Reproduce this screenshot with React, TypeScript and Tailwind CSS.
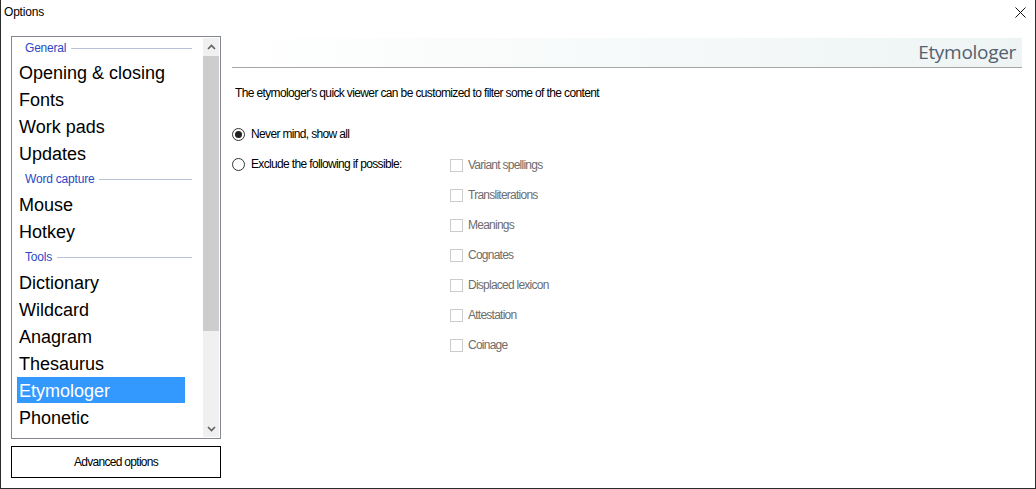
import React from 'react'

type Row = { kind: 'header' | 'item'; label: string; selected?: boolean }

const rows: Row[] = [
  { kind: 'header', label: 'General' },
  { kind: 'item', label: 'Opening & closing' },
  { kind: 'item', label: 'Fonts' },
  { kind: 'item', label: 'Work pads' },
  { kind: 'item', label: 'Updates' },
  { kind: 'header', label: 'Word capture' },
  { kind: 'item', label: 'Mouse' },
  { kind: 'item', label: 'Hotkey' },
  { kind: 'header', label: 'Tools' },
  { kind: 'item', label: 'Dictionary' },
  { kind: 'item', label: 'Wildcard' },
  { kind: 'item', label: 'Anagram' },
  { kind: 'item', label: 'Thesaurus' },
  { kind: 'item', label: 'Etymologer', selected: true },
  { kind: 'item', label: 'Phonetic' },
]

const filters = [
  'Variant spellings',
  'Transliterations',
  'Meanings',
  'Cognates',
  'Displaced lexicon',
  'Attestation',
  'Coinage',
]

function Radio({ checked }: { checked?: boolean }) {
  return (
    <span className="w-[13px] h-[13px] rounded-full border border-[#333] bg-white flex items-center justify-center shrink-0">
      {checked && <span className="w-[7px] h-[7px] rounded-full bg-[#222]" />}
    </span>
  )
}

function Chevron({ up }: { up?: boolean }) {
  return (
    <svg width="9" height="6" viewBox="0 0 9 6" fill="none">
      <path
        d={up ? 'M1 5L4.5 1.5L8 5' : 'M1 1L4.5 4.5L8 1'}
        stroke="#606060"
        strokeWidth="1.6"
      />
    </svg>
  )
}

export default function App() {
  return (
    <div
      className="w-[1036px] h-[489px] bg-white border-x border-b border-[#2b2b2b] flex flex-col text-black"
      style={{ fontFamily: '"Liberation Sans", Arial, sans-serif' }}
    >
      {/* title bar */}
      <div className="h-[24px] flex items-center justify-between pl-[3px] pr-[9px]">
        <span className="text-[12px] tracking-[-0.2px]">Options</span>
        <svg width="11" height="11" viewBox="0 0 11 11">
          <path d="M0.5 0.5L10.5 10.5M10.5 0.5L0.5 10.5" stroke="#111" strokeWidth="1" />
        </svg>
      </div>

      <div className="flex pt-[12px]">
        {/* left column */}
        <div className="ml-[10px] w-[210px] flex flex-col gap-[7px]">
          <div className="h-[403px] border border-[#828790] flex">
            <div className="flex-1 flex flex-col">
              {rows.map((r, i) =>
                r.kind === 'header' ? (
                  <div
                    key={r.label}
                    className={`${i === 0 ? 'h-[22px]' : 'h-[24px]'} flex items-center pl-[13px] pr-[11px] gap-[5px]`}
                  >
                    <span className="text-[12px] text-[#2a48c4] tracking-[-0.2px]">{r.label}</span>
                    <span className="flex-1 h-px bg-[#b8c3da]" />
                  </div>
                ) : (
                  <div key={r.label} className="h-[27px] flex items-start">
                    <div
                      className={`ml-[5px] w-[168px] h-[26px] flex items-center pl-[2px] pt-[3px] text-[18px] ${
                        r.selected ? 'bg-[#3399ff] text-white' : 'text-black'
                      }`}
                    >
                      {r.label}
                    </div>
                  </div>
                )
              )}
            </div>
            {/* scrollbar */}
            <div className="w-[16px] my-[1px] mr-[1px] bg-[#f0f0f0] flex flex-col">
              <div className="h-[17px] flex items-center justify-center">
                <Chevron up />
              </div>
              <div className="h-[275px] bg-[#cdcdcd] mt-[1px]" />
              <div className="flex-1" />
              <div className="h-[17px] flex items-center justify-center">
                <Chevron />
              </div>
            </div>
          </div>
          <div className="h-[32px] border border-black flex items-center justify-center text-[12px] tracking-[-0.7px]">
            Advanced options
          </div>
        </div>

        {/* right column */}
        <div className="ml-[11px] w-[790px] flex flex-col pt-[2px]">
          <div className="h-[30px] border-b border-[#a6a6a6] bg-gradient-to-r from-white to-[#eef4f4] flex items-center justify-end pr-[6px]">
            <span
              className="text-[19px] text-[#53606f] tracking-[-0.3px]"
              style={{ fontFamily: '"Open Sans", "Noto Sans", sans-serif' }}
            >
              Etymologer
            </span>
          </div>

          <div className="mt-[17px] ml-[3px] text-[12px] leading-[16px] tracking-[-0.63px]">
            The etymologer's quick viewer can be customized to filter some of the content
          </div>

          <div className="mt-[18px] flex flex-col text-[12px] tracking-[-0.65px]">
            <div className="h-[30px] flex items-center gap-[6px]">
              <Radio checked />
              <span>Never mind, show all</span>
            </div>
            <div className="flex">
              <div className="w-[218px] h-[30px] flex items-center gap-[6px]">
                <Radio />
                <span>Exclude the following if possible:</span>
              </div>
              <div className="flex flex-col">
                {filters.map((f) => (
                  <div key={f} className="h-[30px] flex items-center gap-[5px] pt-[2px]">
                    <span className="w-[13px] h-[13px] border border-[#cccccc] bg-white shrink-0" />
                    <span className="text-[#6d6d6d] tracking-[-0.75px]">{f}</span>
                  </div>
                ))}
              </div>
            </div>
          </div>
        </div>
      </div>
    </div>
  )
}
